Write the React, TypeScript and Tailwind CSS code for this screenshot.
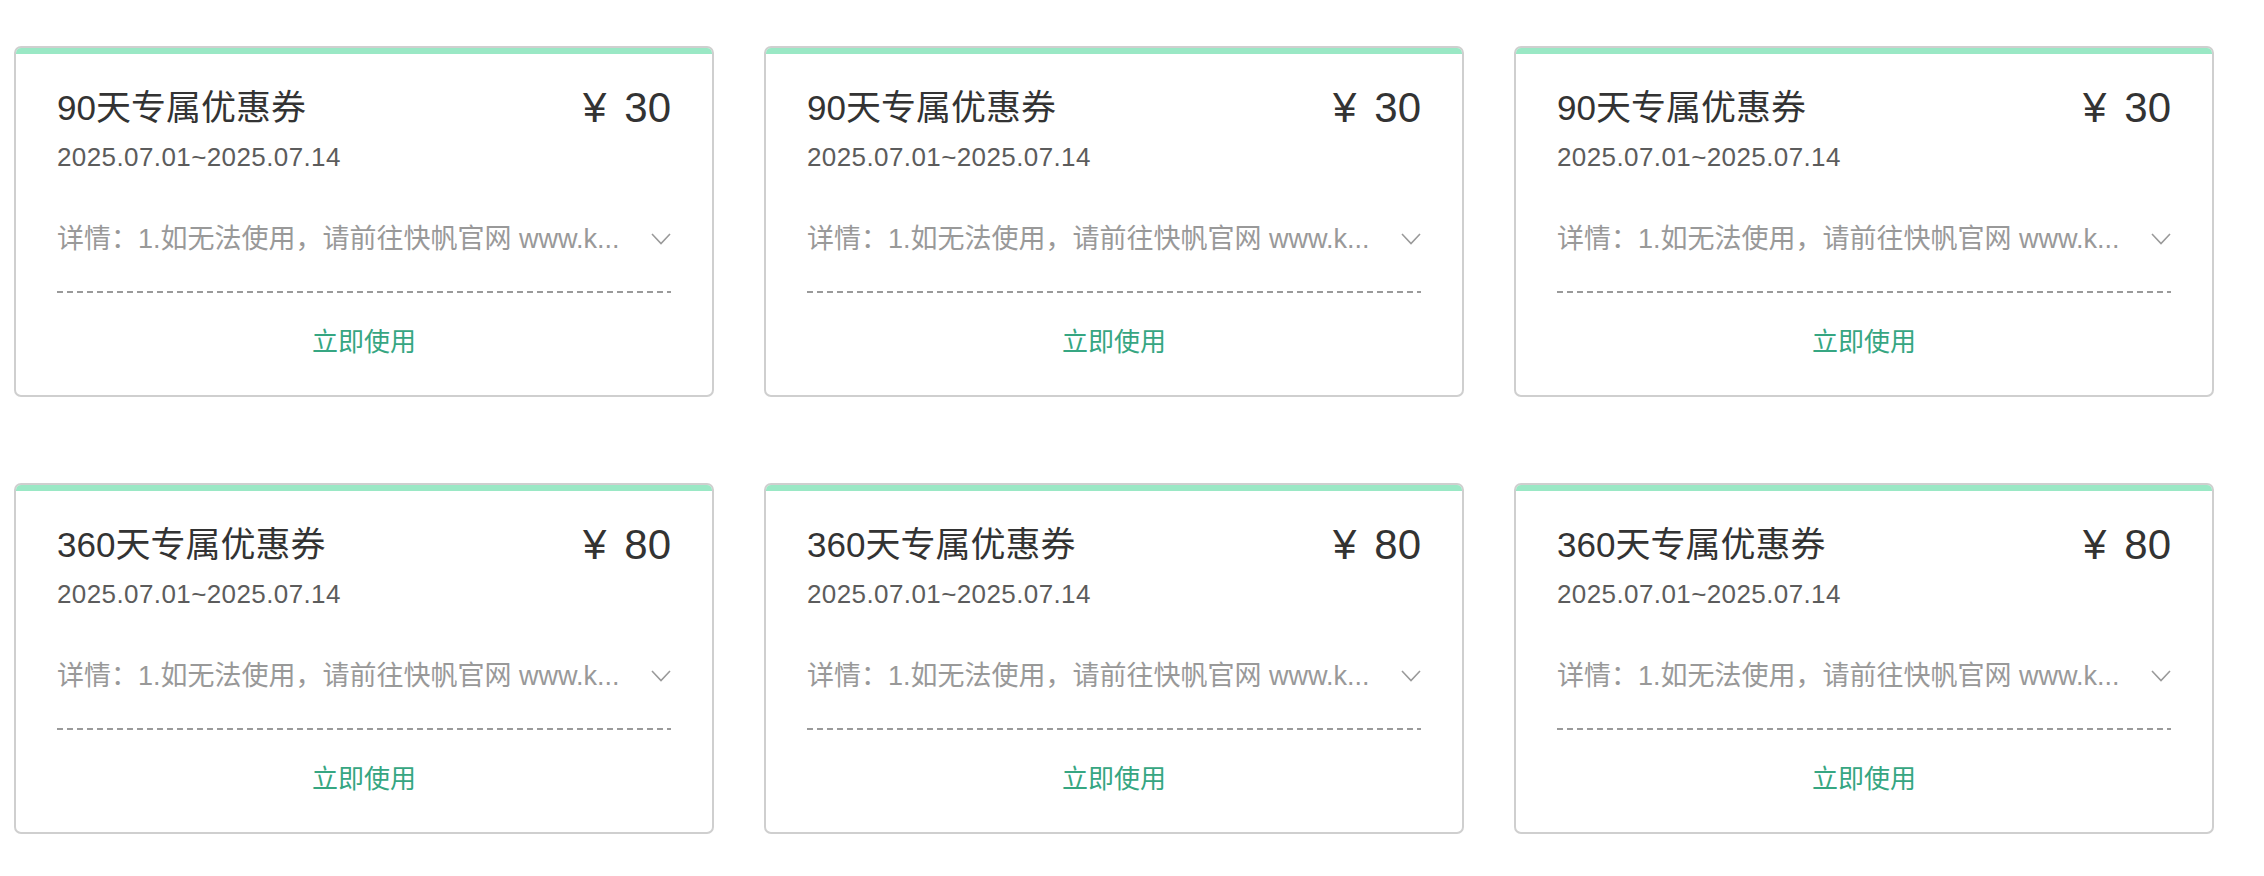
import React from "react";

type Coupon = { title: string; price: string };

const coupons: Coupon[] = [
  { title: "90天专属优惠券", price: "30" },
  { title: "90天专属优惠券", price: "30" },
  { title: "90天专属优惠券", price: "30" },
  { title: "360天专属优惠券", price: "80" },
  { title: "360天专属优惠券", price: "80" },
  { title: "360天专属优惠券", price: "80" },
];

function Chevron() {
  return (
    <svg width="20" height="12" viewBox="0 0 20 12" fill="none" className="shrink-0">
      <polyline points="1,1 10,10.5 19,1" stroke="#9a9a9a" strokeWidth="1.6" fill="none" />
    </svg>
  );
}

function CouponCard({ c }: { c: Coupon }) {
  return (
    <div className="flex h-[351px] w-[700px] flex-col overflow-hidden rounded-[7px] border-2 border-[#cfcfcf] bg-white">
      <div className="h-[6px] w-full bg-[#9ae8c5]" />
      <div className="flex flex-1 flex-col px-[41px] pt-[32px]">
        <div className="flex h-[44px] items-center justify-between">
          <div className="text-[35px] leading-[44px] text-[#333333]">{c.title}</div>
          <div className="flex items-center text-[42px] leading-[44px] text-[#333333]">
            <span>¥</span>
            <span className="ml-[18px]">{c.price}</span>
          </div>
        </div>
        <div className="mt-[11px] text-[26px] leading-[32px] tracking-[0.4px] text-[#5c5c5c]">
          2025.07.01~2025.07.14
        </div>
        <div className="mt-[50px] flex h-[32px] items-center justify-between">
          <div className="truncate text-[27px] leading-[32px] text-[#999999]">
            详情：1.如无法使用，请前往快帆官网 www.k...
          </div>
          <Chevron />
        </div>
        <div className="mt-[36px] h-[2px] w-full bg-[linear-gradient(to_right,#9a9a9a_6px,transparent_6px)] bg-size-[10px_2px] bg-repeat-x" />
        <div className="flex flex-1 items-center justify-center pb-[4px]">
          <span className="text-[26px] leading-[34px] text-[#36a682]">立即使用</span>
        </div>
      </div>
    </div>
  );
}

export default function App() {
  return (
    <div
      className="min-h-[876px] w-[2264px] bg-white pl-[14px] pt-[46px]"
      style={{ fontFamily: '"Liberation Sans", "Noto Sans CJK SC", sans-serif' }}
    >
      <div className="grid grid-cols-[700px_700px_700px] gap-x-[50px] gap-y-[86px]">
        {coupons.map((c, i) => (
          <CouponCard key={i} c={c} />
        ))}
      </div>
    </div>
  );
}
